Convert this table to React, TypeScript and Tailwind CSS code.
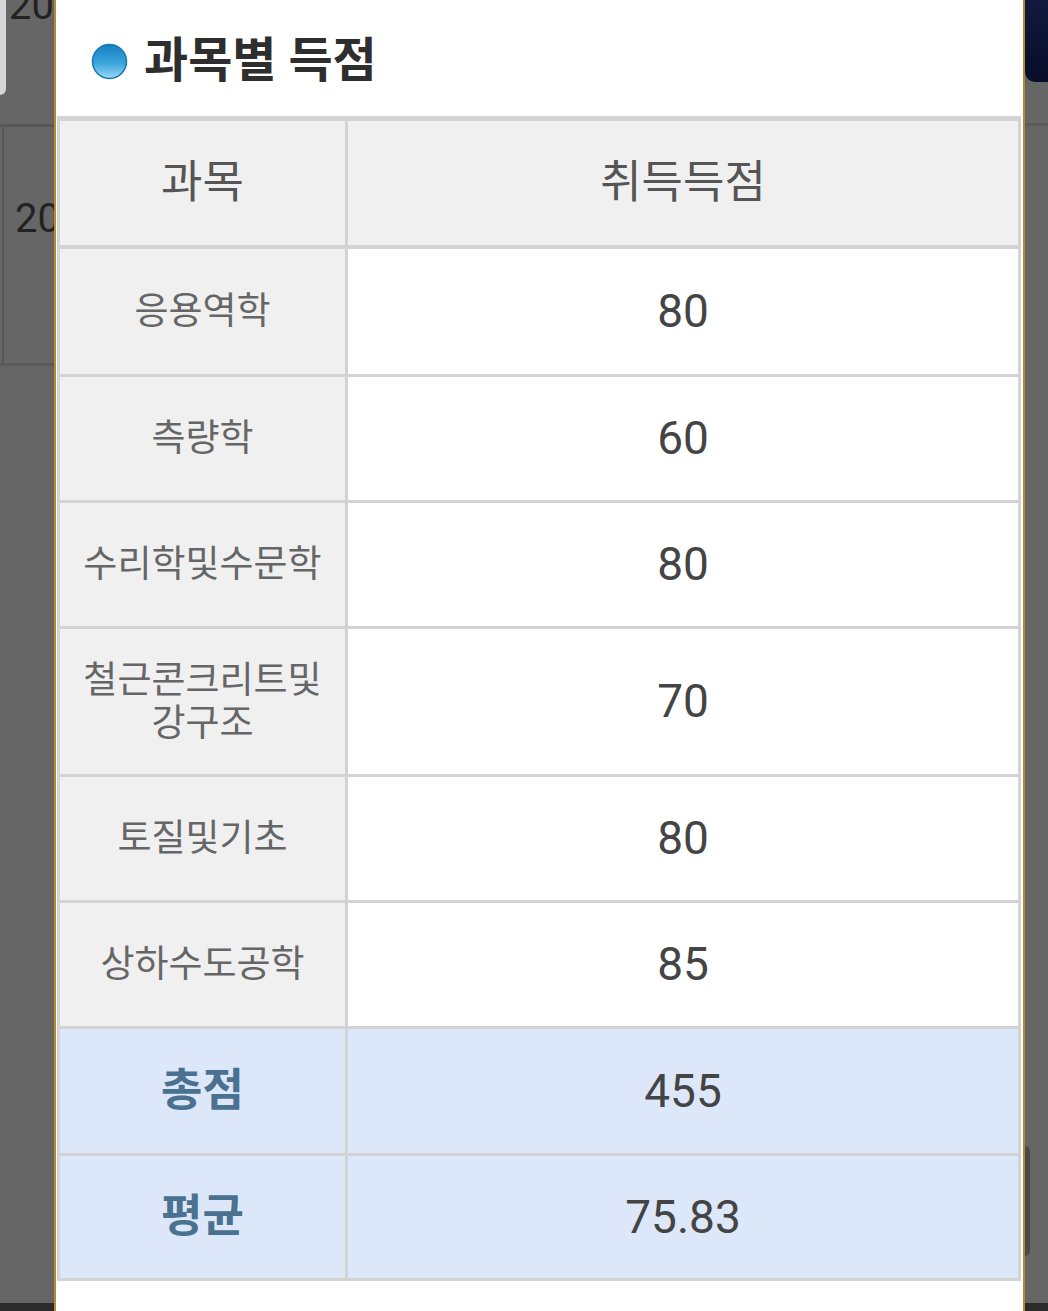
const FONT = "font-['Roboto','Noto_Sans_CJK_KR',sans-serif]";

type Row = { subject: string; score: string; h: string };

const rows: Row[] = [
  { subject: "응용역학", score: "80", h: "h-[125px]" },
  { subject: "측량학", score: "60", h: "h-[123px]" },
  { subject: "수리학및수문학", score: "80", h: "h-[123px]" },
  { subject: "철근콘크리트및강구조", score: "70", h: "h-[145px]" },
  { subject: "토질및기초", score: "80", h: "h-[123px]" },
  { subject: "상하수도공학", score: "85", h: "h-[123px]" },
];

function Bullet() {
  return (
    <svg width="37" height="37" viewBox="0 0 37 37">
      <defs>
        <linearGradient id="ball" x1="0" y1="0" x2="0" y2="1">
          <stop offset="0" stopColor="#1580c4" />
          <stop offset="0.55" stopColor="#3aa4dc" />
          <stop offset="1" stopColor="#9adaf5" />
        </linearGradient>
      </defs>
      <circle cx="18.5" cy="18.5" r="17" fill="url(#ball)" stroke="#1479b0" strokeWidth="1.5" />
    </svg>
  );
}

export default function App() {
  return (
    <div className={`flex h-[1311px] w-[1048px] overflow-hidden bg-[#666666] ${FONT}`}>
      {/* page behind the dialog, left side */}
      <div className="flex w-[54px] shrink-0 flex-col">
        <div className="flex h-[124px] gap-[3px]">
          <div className="h-[95px] w-[12px] rounded-br-[10px] bg-[#d6d6d6]" />
          <span className="-mt-[14px] text-[40px] leading-none text-[#222]">20</span>
        </div>
        <div className="h-[3px] bg-[#575757]" />
        <div className="ml-[2px] flex h-[236px] border-l-[2px] border-[#585858] pl-[11px] pt-[72px]">
          <span className="text-[40px] leading-none text-[#222]">20</span>
        </div>
        <div className="h-[3px] bg-[#5a5a5a]" />
        <div className="flex-1" />
        <div className="h-[8px] bg-[#2b2b2b]" />
      </div>

      {/* dialog */}
      <div className="flex w-[971px] shrink-0 flex-col border-x-[2px] border-[#b7882c] bg-white">
        <div className="flex h-[116px] items-center pl-[35px] pt-[6px]">
          <Bullet />
          <h2 className="ml-[16px] text-[48px] font-bold leading-none text-[#2e2e2e]">과목별 득점</h2>
        </div>

        <div className="ml-[1px] mr-[2px] flex flex-col gap-[3px] bg-[#d3d3d3] p-[3px] pt-[5px]">
          <div className="mb-[1px] grid h-[124px] grid-cols-[285px_1fr] gap-x-[3px]">
            <div className="flex items-center justify-center bg-[#f0f0f0] text-[45px] text-[#555]">과목</div>
            <div className="flex items-center justify-center bg-[#f0f0f0] text-[45px] text-[#555]">취득득점</div>
          </div>

          {rows.map((r) => (
            <div key={r.subject} className={`grid ${r.h} grid-cols-[285px_1fr] gap-x-[3px]`}>
              <div className="flex items-center justify-center bg-[#f0f0f0] px-[18px] text-center text-[37px] leading-[43px] text-[#666]">
                {r.subject}
              </div>
              <div className="flex items-center justify-center bg-white text-[46px] text-[#444]">{r.score}</div>
            </div>
          ))}

          <div className="grid h-[124px] grid-cols-[285px_1fr] gap-x-[3px]">
            <div className="flex items-center justify-center bg-[#dce7f9] text-[45px] font-bold text-[#4a7190]">총점</div>
            <div className="flex items-center justify-center bg-[#dce7f9] text-[46px] text-[#444]">455</div>
          </div>
          <div className="grid h-[122px] grid-cols-[285px_1fr] gap-x-[3px]">
            <div className="flex items-center justify-center bg-[#dce7f9] text-[45px] font-bold text-[#4a7190]">평균</div>
            <div className="flex items-center justify-center bg-[#dce7f9] text-[46px] text-[#444]">75.83</div>
          </div>
        </div>
        <div className="flex-1" />
      </div>

      {/* page behind the dialog, right side */}
      <div className="flex flex-1 flex-col">
        <div className="h-[82px] rounded-bl-[10px] bg-gradient-to-b from-[#111a3e] to-[#070d2a]" />
        <div className="h-[41px]" />
        <div className="h-[3px] bg-[#5a5a5a]" />
        <div className="h-[1020px]" />
        <div className="h-[110px] w-[5px] rounded-r-[6px] bg-[#4a4a4a]" />
        <div className="flex-1" />
        <div className="h-[8px] bg-[#2b2b2b]" />
      </div>
    </div>
  );
}
